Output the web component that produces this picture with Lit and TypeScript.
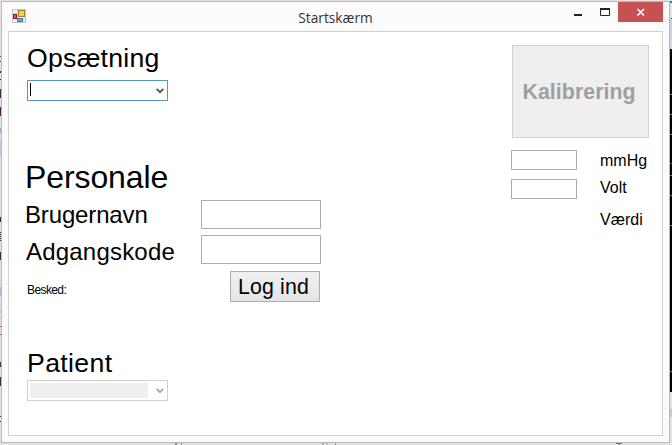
import { LitElement, html, css, svg } from "lit";
import { customElement, property } from "lit/decorators.js";

@customElement("combo-box")
class ComboBox extends LitElement {
  @property({ type: Boolean, reflect: true }) disabled = false;

  static styles = css`
    :host { display: flex; box-sizing: border-box; width: 141px; height: 21px; border: 1px solid #5c93c9; background: #fff; padding: 2px; align-items: center; color: #505050; }
    :host([disabled]) { border-color: #d0d0d0; color: #a8a8a8; }
    .value { width: 118px; height: 15px; }
    :host([disabled]) .value { background: #efefef; }
    .caret { width: 1px; height: 13px; background: #000; }
    svg { margin-left: 8px; display: block; }
  `;

  render() {
    return html`<div class="value">${this.disabled ? "" : html`<div class="caret"></div>`}</div>
      <svg width="8" height="6" viewBox="0 0 8 6"><path d="M0.7 0.9 L4 4.2 L7.3 0.9" fill="none" stroke="currentColor" stroke-width="1.8"/></svg>`;
  }
}

@customElement("app-root")
class AppRoot extends LitElement {
  static styles = css`
    :host { display: flex; box-sizing: border-box; width: 672px; height: 445px; padding: 1px 2px 2px 1px; overflow: hidden;
      font-family: "Liberation Sans", Arial, sans-serif; color: #000;
      background:
        linear-gradient(#555, #555) 0 56px / 1px 1px no-repeat,
        linear-gradient(#555, #555) 0 61px / 1px 1px no-repeat,
        linear-gradient(#333, #333) 0 71px / 1px 2px no-repeat,
        linear-gradient(#333, #333) 0 79px / 1px 1px no-repeat,
        linear-gradient(#4a2350, #4a2350) 0 89px / 1px 9px no-repeat,
        linear-gradient(#4a2350, #4a2350) 0 107px / 1px 9px no-repeat,
        linear-gradient(#8eb4d8, #8eb4d8) 0 128px / 1px 5px no-repeat,
        linear-gradient(#bccbd8, #bccbd8) 0 141px / 1px 15px no-repeat,
        linear-gradient(#4a2a3a, #4a2a3a) 0 217px / 1px 5px no-repeat,
        repeating-linear-gradient(#333 0 1px, #ddd 1px 2px) 0 232px / 1px 10px no-repeat,
        linear-gradient(#4a2a3a, #4a2a3a) 0 252px / 1px 8px no-repeat,
        linear-gradient(#9fc0e0, #9fc0e0) 0 287px / 1px 9px no-repeat,
        linear-gradient(#d8c8b0, #d8c8b0) 0 310px / 1px 3px no-repeat,
        linear-gradient(#8a6060, #8a6060) 0 326px / 1px 1px no-repeat,
        linear-gradient(#8a6060, #8a6060) 0 334px / 1px 1px no-repeat,
        linear-gradient(#443344, #443344) 0 362px / 1px 5px no-repeat,
        linear-gradient(#4a2350, #4a2350) 0 377px / 1px 9px no-repeat,
        linear-gradient(#444, #444) 0 416px / 1px 1px no-repeat,
        linear-gradient(#444, #444) 0 421px / 1px 1px no-repeat,
        linear-gradient(#888, #888) 175px 443px / 2px 2px no-repeat,
        linear-gradient(#888, #888) 181px 443px / 1px 2px no-repeat,
        linear-gradient(#aaa, #aaa) 322px 443px / 2px 2px no-repeat,
        linear-gradient(#bbb, #bbb) 326px 443px / 2px 2px no-repeat,
        linear-gradient(#999, #999) 335px 443px / 1px 2px no-repeat,
        linear-gradient(#777, #777) 616px 443px / 6px 1px no-repeat,
        linear-gradient(#999, #999) 618px 444px / 2px 1px no-repeat,
        linear-gradient(#16858c, #16858c) 670px 1px / 2px 2px no-repeat,
        linear-gradient(#444, #444) 671px 18px / 1px 1px no-repeat,
        linear-gradient(#777, #777) 670px 94px / 2px 1px no-repeat,
        linear-gradient(#777, #777) 670px 114px / 2px 1px no-repeat,
        linear-gradient(#777, #777) 670px 134px / 2px 1px no-repeat,
        linear-gradient(#3b6b3b, #3b6b3b) 670px 163px / 2px 1px no-repeat,
        linear-gradient(#777, #777) 670px 175px / 2px 1px no-repeat,
        linear-gradient(#777, #777) 670px 195px / 2px 1px no-repeat,
        linear-gradient(#777, #777) 670px 225px / 2px 1px no-repeat,
        linear-gradient(#777, #777) 670px 371px / 2px 1px no-repeat,
        linear-gradient(#000, #000) 670px 49px / 2px 343px no-repeat,
        linear-gradient(#c6d2da, #d5dce4) 670px 19px / 2px 30px no-repeat,
        linear-gradient(#c9c9dc, #c9c9dc) 670px 409px / 2px 8px no-repeat,
        linear-gradient(#e2e2e2, #e2e2e2); }
    .window { box-sizing: border-box; width: 669px; height: 442px; border: 1px solid #b9b9b9; background: #fbfbfb; display: flex; flex-direction: column; padding: 0 6px 6px; }
    .bar { height: 29px; display: flex; flex: none; position: relative; }
    .logo { margin: 7px 0 0 4px; }
    .title { position: absolute; left: 0; right: 0; text-align: center; top: 5px; font: 15px/20px "Open Sans", sans-serif; transform: scaleX(0.915); color: #333; }
    .controls { display: flex; margin-left: auto; }
    .close { width: 45px; height: 20px; background: #c75050; }
    .client { flex: 1; box-sizing: border-box; border: 1px solid #d0d0d0; background: #fff; display: flex; justify-content: space-between; }
    .left { padding-left: 18px; width: 300px; display: flex; flex-direction: column; }
    .h { font-size: 26.67px; letter-spacing: 0.25px; line-height: 30px; white-space: nowrap; }
    .setup { margin: 11px 0 0; padding-bottom: 7px; }
    .staff { font-size: 32px; letter-spacing: -0.1px; line-height: 36px; margin: 58px 0 0 -2px; }
    .row { display: flex; margin-left: -2px; height: 29px; font-size: 24px; line-height: 30px; justify-content: space-between; width: 296px; }
    .user { margin-top: 5px; letter-spacing: -0.15px; }
    .code { margin-top: 6px; letter-spacing: 0.2px; line-height: 34px; }
    .code span { margin-left: 1px; }
    .field { box-sizing: border-box; border: 1px solid #ababab; background: #fff; width: 120px; height: 29px; }
    .login { display: flex; justify-content: space-between; width: 293px; margin-top: 7px; height: 31px; }
    .msg { font-size: 12px; letter-spacing: -0.6px; line-height: 13px; margin-top: 13px; }
    .button { box-sizing: border-box; width: 90px; height: 31px; border: 1px solid #acacac; background: linear-gradient(#f0f0f0, #e5e5e5); font-size: 21.33px; letter-spacing: 0.15px; line-height: 30px; padding-left: 7px; white-space: nowrap; }
    .patient { margin: 46px 0 0; padding-bottom: 2px; letter-spacing: 0.35px; }
    .right { width: 151px; padding-top: 13px; }
    .calibrate { box-sizing: border-box; width: 137px; height: 93px; margin-left: 1px; border: 1px solid #d0d0d0; background: #efefef; color: #9f9f9f; font-weight: bold; font-size: 21.33px; letter-spacing: 0.05px; line-height: 93px; padding-left: 9.5px; }
    .measure { display: grid; grid-template-columns: 66px auto; column-gap: 23px; grid-template-rows: 29px 29px 29px; margin-top: 12px; font-size: 16px; line-height: 20px; }
    .measure span { padding-top: 1px; }
    .small { width: 66px; height: 20px; }
    .volt { margin-top: -2px; }
    .value { grid-column: 2; margin-top: 1px; }
  `;

  private logo() {
    return svg`<rect x="0.5" y="0.5" width="13" height="13" fill="#f2f3ee" stroke="#c3c7bd"/>
      <path d="M5.5 1V9M1 4.5H6M1 9.5H13M5.5 9V13" stroke="#d4d7cf" fill="none"/>
      <rect x="6.5" y="1.5" width="6" height="6" fill="#f8cf4b" stroke="#a58131"/>
      <rect x="1.5" y="5.5" width="3" height="4" fill="#d65a60" stroke="#921821"/>
      <rect x="5.5" y="9.5" width="5" height="3" fill="#6d9cec" stroke="#4778d0"/>`;
  }

  render() {
    return html`<div class="window">
      <div class="bar">
        <svg class="logo" width="14" height="14">${this.logo()}</svg>
        <div class="title">Startskærm</div>
        <div class="controls">
          <svg width="44" height="20"><path d="M0 13H8" stroke="#222" stroke-width="2"/><path d="M27 6.5H35.5V13.5H26.5V7H35" fill="none" stroke="#222"/><path d="M26 7H36" stroke="#222" stroke-width="2"/></svg>
          <svg class="close" width="45" height="20"><path d="M19.5 7L26 13.5M26 7L19.5 13.5" stroke="#fff" stroke-width="1.7"/></svg>
        </div>
      </div>
      <div class="client">
        <div class="left">
          <div class="h setup">Opsætning</div>
          <combo-box></combo-box>
          <div class="staff">Personale</div>
          <div class="row user"><span>Brugernavn</span><div class="field"></div></div>
          <div class="row code"><span>Adgangskode</span><div class="field"></div></div>
          <div class="login"><span class="msg">Besked:</span><div class="button">Log ind</div></div>
          <div class="h patient">Patient</div>
          <combo-box disabled></combo-box>
        </div>
        <div class="right">
          <div class="calibrate">Kalibrering</div>
          <div class="measure">
            <div class="field small"></div><span>mmHg</span>
            <div class="field small"></div><span class="volt">Volt</span>
            <span class="value">Værdi</span>
          </div>
        </div>
      </div>
    </div>`;
  }
}
